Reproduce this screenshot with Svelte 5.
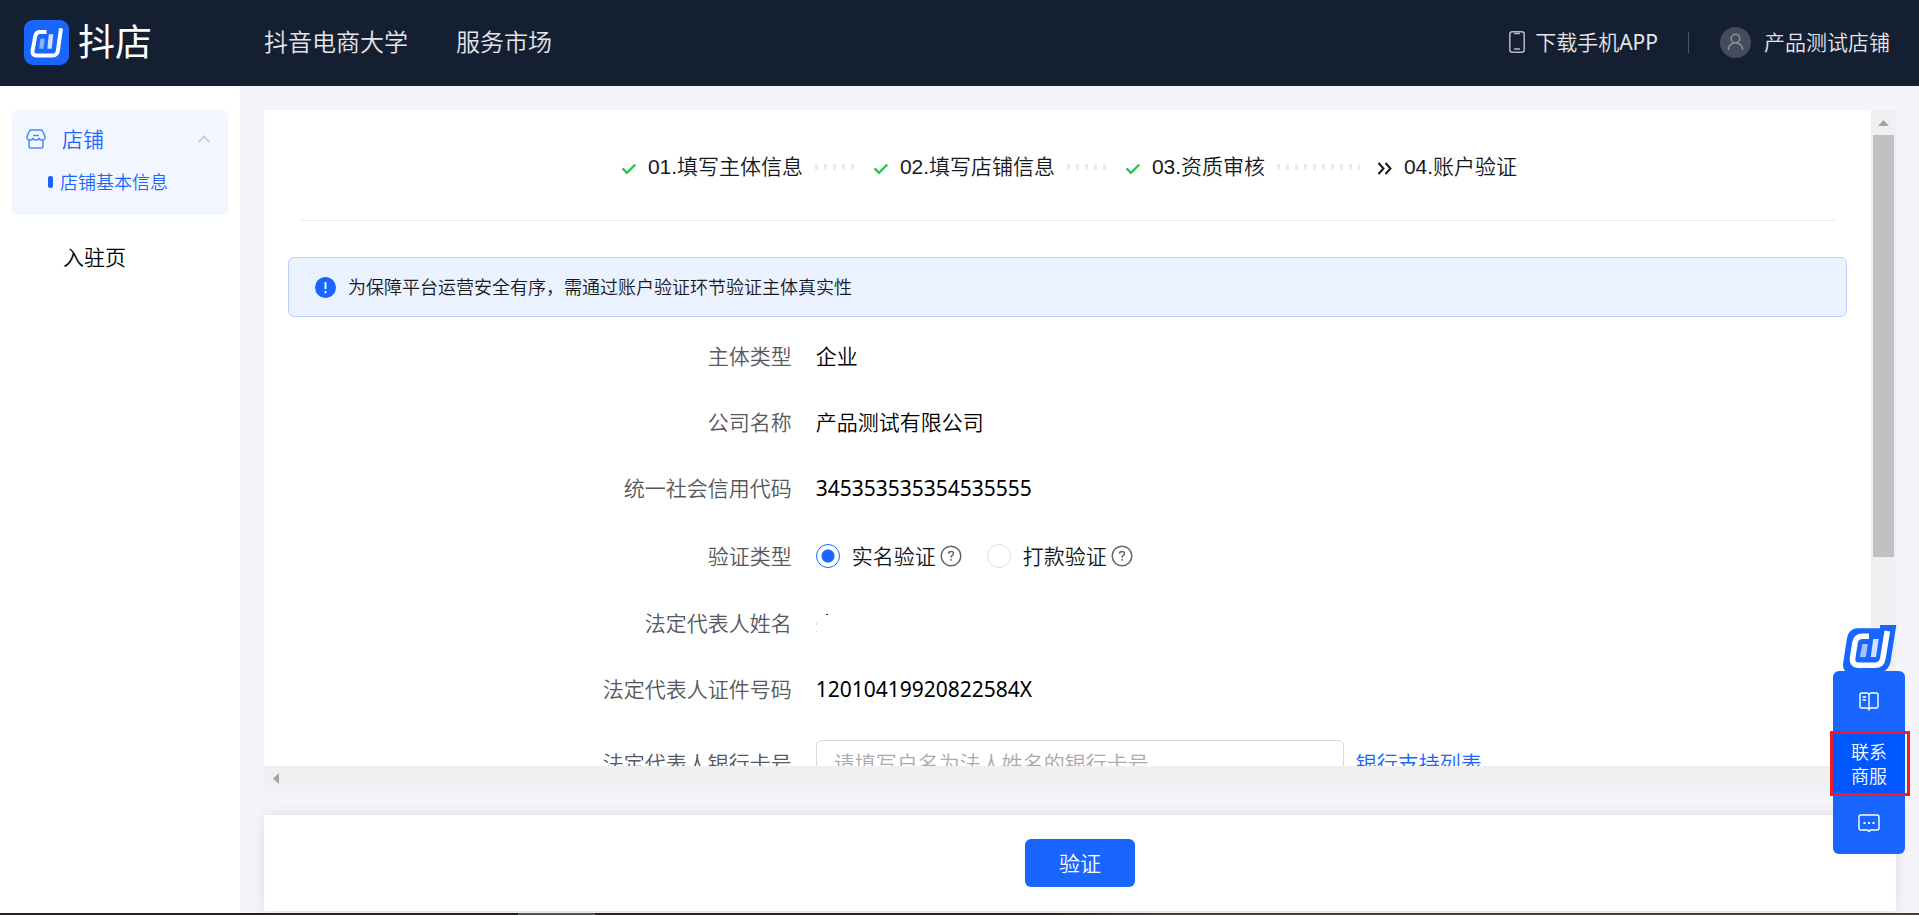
<script>
    let verifyType = "real";
    let cardNo = "";

    const navLinks = ["抖音电商大学", "服务市场"];

    const steps = [
        { text: "01.填写主体信息", done: true },
        { text: "02.填写店铺信息", done: true },
        { text: "03.资质审核", done: true },
        { text: "04.账户验证", done: false }
    ];

    const baseInfo = [
        { label: "主体类型", value: "企业" },
        { label: "公司名称", value: "产品测试有限公司" },
        { label: "统一社会信用代码", value: "345353535354535555", code: true }
    ];

    const verifyTypes = [
        { id: "real", text: "实名验证" },
        { id: "pay", text: "打款验证" }
    ];
</script>

<div class="app">
    <header>
        <a class="logo" href="#home">
            <svg width="45" height="45" viewBox="0 0 45 45" aria-hidden="true">
                <rect width="45" height="45" rx="9" fill="#1966ff" />
                <path d="M22.5 12H16Q12 12 11.3 16L8.6 30.5Q7.8 35.5 12.5 35.5H28.5Q33 35.5 33.8 31L37 8.3" fill="none" stroke="#fff" stroke-width="4" />
                <path d="M16.4 18.7h4.4l-1.4 10H15z" fill="#8cb2ff" />
                <path d="M24.8 14.3h4.5l-1.6 14.4h-4.4z" fill="#d1e0ff" />
            </svg>
            <span>抖店</span>
        </a>
        <nav>
            {#each navLinks as link}
                <a href="#nav">{link}</a>
            {/each}
        </nav>
        <a class="download" href="#app">
            <svg width="16" height="22" viewBox="0 0 16 22" fill="none" stroke="#b4b8bf" aria-hidden="true">
                <rect x="0.8" y="0.8" width="14.4" height="20.4" rx="2.5" stroke-width="1.5" />
                <path d="M5 2.5h6M5 18h6" stroke-width="1.4" />
            </svg>
            <span>下载手机<span class="code">APP</span></span>
        </a>
        <i class="split"></i>
        <button class="user">
            <svg width="31" height="31" viewBox="0 0 31 31" fill="none" aria-hidden="true">
                <circle cx="15.5" cy="15.5" r="15.5" fill="#444c5b" />
                <circle cx="15.5" cy="11.5" r="4.3" stroke="#8b919c" stroke-width="1.5" />
                <path d="M8.3 23c0-4.5 3.2-7.2 7.2-7.2s7.2 2.7 7.2 7.2" stroke="#8b919c" stroke-width="1.5" />
            </svg>
            <span>产品测试店铺</span>
        </button>
    </header>

    <div class="body">
        <aside>
            <div class="group">
                <button class="group-title">
                    <svg width="20" height="20" viewBox="0 0 20 20" fill="none" stroke="#4a87ff" stroke-width="1.5" aria-hidden="true">
                        <path d="M5 1h10q1 0 1.5 1L19 7.5q.3 3.5-3 3.5-2 0-3-1.5-1 1.5-3 1.5T7 9.5Q6 11 4 11 .7 11 1 7.5L3.5 2Q4 1 5 1z" />
                        <path d="M3 11v6.500q0 1.500 1.500 1.500h11q1.500 0 1.500-1.500V11M7 6.500h6" />
                    </svg>
                    <span>店铺</span>
                    <svg class="arrow" width="12" height="8" viewBox="0 0 12 8" fill="none" stroke="#c4c8cf" stroke-width="1.5" aria-hidden="true">
                        <path d="M.7 7.2L6 1.2l5.3 6" />
                    </svg>
                </button>
                <a class="sub" href="#shop">店铺基本信息</a>
            </div>
            <a class="entry" href="#entry">入驻页</a>
        </aside>

        <main>
            <section class="panel">
                <div class="content">
                    <ol class="steps">
                        {#each steps as step}
                            <li>
                                {#if step.done}
                                    <svg width="18" height="18" viewBox="0 0 18 18" fill="none" stroke="#29c352" stroke-width="2.4" aria-hidden="true">
                                        <path d="M2.5 10.3l4.4 4.6L15.3 6.5" />
                                    </svg>
                                {:else}
                                    <svg width="18" height="18" viewBox="0 0 18 18" fill="none" stroke="#16181d" stroke-width="2" aria-hidden="true">
                                        <path d="M2.5 5L7.5 10.5l-5 5.5M9.5 5L14.5 10.5l-5 5.5" />
                                    </svg>
                                {/if}
                                <span>{step.text}</span>
                                {#if step.done}
                                    <i class="dots"></i>
                                {/if}
                            </li>
                        {/each}
                    </ol>

                    <div class="alert">
                        <svg width="21" height="21" viewBox="0 0 21 21" aria-hidden="true">
                            <circle cx="10.5" cy="10.5" r="10.5" fill="#1966ff" />
                            <path d="M10.5 5v7M10.5 14v2.2" stroke="#fff" stroke-width="1.8" />
                        </svg>
                        <span>为保障平台运营安全有序，需通过账户验证环节验证主体真实性</span>
                    </div>

                    <form>
                        {#each baseInfo as item}
                            <div class="row">
                                <span class="label">{item.label}</span>
                                <span class="value" class:code={item.code}>{item.value}</span>
                            </div>
                        {/each}
                        <div class="row radios">
                            <span class="label">验证类型</span>
                            <div class="value" role="radiogroup" aria-label="验证类型">
                                {#each verifyTypes as type}
                                    <label class="radio">
                                        <input type="radio" name="verify" value={type.id} bind:group={verifyType} />
                                        <span>{type.text}</span>
                                        <svg width="22" height="22" viewBox="0 0 22 22" fill="none" stroke="#63666c" aria-hidden="true">
                                            <circle cx="11" cy="11" r="9.8" stroke-width="1.5" />
                                            <path d="M8.5 8.8q0-2.4 2.5-2.4t2.5 2.2q0 1.3-1.4 2.1-1.1.7-1.1 2M11 14v1.7" stroke-width="1.5" />
                                        </svg>
                                    </label>
                                {/each}
                            </div>
                        </div>
                        <div class="row">
                            <span class="label">法定代表人姓名</span>
                            <span class="value">
                                <svg width="12" height="24" viewBox="0 0 12 24" aria-hidden="true">
                                    <rect x="10" y="3" width="2" height="1" fill="#222" />
                                    <rect x="0" y="12" width="1" height="2" fill="#ffc57a" />
                                    <rect x="0" y="20" width="1" height="1" fill="#ffdcae" />
                                </svg>
                            </span>
                        </div>
                        <div class="row">
                            <span class="label">法定代表人证件号码</span>
                            <span class="value code">12010419920822584X</span>
                        </div>
                        <div class="row card">
                            <label class="label" for="card">法定代表人银行卡号</label>
                            <div class="value">
                                <input id="card" type="text" placeholder="请填写户名为法人姓名的银行卡号" bind:value={cardNo} />
                                <a href="#banks">银行支持列表</a>
                            </div>
                        </div>
                    </form>
                </div>
                <div class="track-y" aria-hidden="true">
                    <svg width="11" height="6" viewBox="0 0 11 6"><path d="M0 6L5.5 0 11 6z" fill="#a3a3a3" /></svg>
                    <i class="thumb"></i>
                </div>
                <div class="track-x" aria-hidden="true">
                    <svg width="6" height="11" viewBox="0 0 6 11"><path d="M6 0L0 5.5 6 11z" fill="#a3a3a3" /></svg>
                </div>
            </section>

            <footer>
                <button class="submit">验证</button>
            </footer>
        </main>
    </div>
    <div class="strip"></div>

    <div class="float">
        <svg class="mark" width="54" height="47" viewBox="0 0 54 47" aria-hidden="true">
            <path d="M37 3.3V0H53.3L47.5 37Q46 44 40 47H3Q-.6 44 .2 38L4 13Q6 3.3 15 3.3z" fill="#1966ff" />
            <path d="M26 11.2H19.5Q13 11.2 12 17.5L9.7 32.5Q8.5 40.3 16 40.3H32Q38.8 40.3 39.9 33L44.3 6" fill="none" stroke="#fff" stroke-width="5.6" />
            <path d="M19.3 19h5.5l-2 13h-6z" fill="#a3c2ff" />
            <path d="M30.2 14h5.5l-2.7 18h-5.2z" fill="#d1e0ff" />
        </svg>
        <div class="tools">
            <button aria-label="帮助文档">
                <svg width="20" height="19" viewBox="0 0 20 19" fill="none" stroke="#fff" stroke-width="1.4" aria-hidden="true">
                    <path d="M10 2.5Q9.5 1 8 1H2.5Q1 1 1 2.5v12Q1 16 2.5 16H8q1.5 0 2 1.5.5-1.5 2-1.5h5.5q1.5 0 1.5-1.5v-12Q19 1 17.5 1H12q-1.5 0-2 1.5zV17M3.5 5H7M3.5 8H7" />
                </svg>
            </button>
            <button class="contact">联系<br />商服</button>
            <button aria-label="消息">
                <svg width="22" height="19" viewBox="0 0 22 19" fill="none" aria-hidden="true">
                    <path d="M3 1h16q2 0 2 2v11q0 2-2 2h-6.500L11 17.500 9.500 16H3q-2 0-2-2V3q0-2 2-2z" stroke="#fff" stroke-width="1.4" />
                    <path d="M5.500 8h2v2h-2zM10 8h2v2h-2zM14.500 8h2v2h-2z" fill="#fff" />
                </svg>
            </button>
        </div>
    </div>
</div>

<style>
    :global(body) {
        background: #f4f4fa;
    }

    .app {
        display: flex;
        flex-direction: column;
        height: 100vh;
        overflow: hidden;
        font-family: "Noto Sans", "Noto Sans CJK SC", sans-serif;
        font-size: 21px;
        font-weight: 350;
        line-height: 30px;
        color: #16181d;
    }

    .app * {
        box-sizing: border-box;
    }

    a {
        color: inherit;
        text-decoration: none;
    }

    button {
        border: none;
        padding: 0;
        background: transparent;
        font: inherit;
        color: inherit;
        cursor: pointer;
    }

    svg {
        flex: none;
        display: block;
    }

    header {
        flex: none;
        display: flex;
        align-items: center;
        height: 86px;
        padding: 0 29px 2px 24px;
        background: #151f32;
        color: #e4e6e9;
    }

    .logo {
        display: flex;
        align-items: center;
        gap: 9px;
        width: 240px;
        font-size: 37px;
        font-weight: 400;
        color: #fff;
    }

    nav {
        display: flex;
        gap: 48px;
        margin-right: auto;
        font-size: 24px;
    }

    .download {
        display: flex;
        align-items: center;
        gap: 10px;
    }

    .code {
        font-weight: 400;
    }

    .split {
        width: 1px;
        height: 21px;
        margin: 0 31px 0 30px;
        background: #4c5461;
    }

    .user {
        display: flex;
        align-items: center;
        gap: 13px;
    }

    .body {
        flex: 1;
        display: flex;
        min-height: 0;
    }

    aside {
        flex: none;
        width: 240px;
        padding: 24px 12px;
        background: #fff;
    }

    .group {
        padding: 14px 18px 17px 14px;
        border-radius: 6px;
        background: #f2f7ff;
        color: #1966ff;
    }

    .group-title {
        display: flex;
        align-items: center;
        gap: 16px;
        width: 100%;
    }

    .arrow {
        margin-left: auto;
    }

    .sub {
        display: flex;
        align-items: center;
        gap: 7px;
        height: 44px;
        padding: 12px 0 0 22px;
        font-size: 18px;
    }

    .sub::before {
        content: "";
        width: 5px;
        height: 12px;
        border-radius: 2px;
        background: #1966ff;
    }

    .entry {
        display: block;
        margin-top: 27px;
        padding-left: 51px;
        color: #000;
    }

    main {
        flex: 1;
        display: flex;
        flex-direction: column;
        gap: 24px;
        min-width: 0;
        padding: 24px 23px 2px 24px;
    }

    .panel {
        flex: 1;
        display: grid;
        grid-template-columns: 1fr 25px;
        grid-template-rows: 1fr 25px;
        min-height: 0;
        background: #fff;
    }

    .content {
        min-height: 0;
        overflow: hidden;
        padding: 0 24px;
    }

    .steps {
        display: flex;
        justify-content: center;
        height: 111px;
        margin: 0 12px;
        padding: 42px 0 0 2px;
        border-bottom: 1px solid #ededed;
        list-style: none;
        font-family: "Liberation Sans", "Noto Sans CJK SC", sans-serif;
    }

    .steps li {
        display: flex;
        align-items: center;
        height: 30px;
        white-space: nowrap;
    }

    .steps li:not(:last-child) {
        width: 252px;
    }

    .steps span {
        margin-left: 10px;
    }

    .dots {
        flex: 1;
        height: 6px;
        margin: 0 16px 0 12px;
        background: repeating-linear-gradient(90deg, #ebebed 0 3px, transparent 3px 9px);
    }

    .alert {
        display: flex;
        align-items: center;
        gap: 12px;
        height: 60px;
        margin: 36px 0 18px;
        padding: 0 27px 0 26px;
        border: 1px solid #b8d0ff;
        border-radius: 6px;
        background: #ebf2ff;
        font-size: 18px;
    }

    form {
        padding-right: 24px;
    }

    .row {
        display: grid;
        grid-template-columns: 1fr 2fr;
        gap: 24px;
        align-items: center;
        height: 42px;
        margin-bottom: 24px;
    }

    .label {
        text-align: right;
        color: #55585c;
    }

    .value {
        color: #000;
    }

    .radios {
        height: 45px;
    }

    .radios .value {
        display: flex;
        gap: 25px;
        color: #16181d;
    }

    .radio {
        display: flex;
        align-items: center;
    }

    .radio span {
        margin: 0 4px 0 12px;
    }

    .radio input {
        appearance: none;
        width: 24px;
        height: 24px;
        margin: 0;
        border: 1px solid #dcdee1;
        border-radius: 50%;
        background: #fff;
    }

    .radio input:checked {
        border-color: #1966ff;
        background: radial-gradient(circle, #1966ff 6px, #fff 7px);
    }

    .card {
        height: 48px;
        margin-top: 30px;
    }

    .card .value {
        display: flex;
        align-items: center;
        gap: 12px;
    }

    .card input {
        width: 528px;
        height: 48px;
        padding: 0 17px 2px;
        border: 1px solid #d6d8db;
        border-radius: 6px;
        outline: none;
        font: inherit;
    }

    .card .label,
    .card a {
        padding-bottom: 2px;
    }

    .card input::placeholder {
        color: #a9abae;
    }

    .card a {
        color: #1966ff;
    }

    .track-y {
        display: flex;
        flex-direction: column;
        align-items: center;
        padding: 10px 2px 25px;
        background: #f0f0f0;
    }

    .thumb {
        width: 100%;
        height: 68%;
        margin-top: 9px;
        background: #c1c1c1;
    }

    .track-x {
        grid-column: 1 / 3;
        display: flex;
        align-items: center;
        padding-left: 9px;
        background: #f0f0f0;
    }

    footer {
        flex: none;
        display: flex;
        align-items: center;
        justify-content: center;
        height: 96px;
        background: #fff;
        box-shadow: 0 0 12px rgba(20, 20, 40, 0.1);
    }

    .submit {
        height: 48px;
        padding: 0 34px;
        border-radius: 6px;
        background: #1966ff;
        color: #fff;
    }

    .strip {
        flex: none;
        height: 2px;
        background: linear-gradient(90deg, #231f22 27%, #555355 27% 31%, #231f22 31% 54%, #45402a 60%);
    }

    .float {
        position: fixed;
        right: 14px;
        bottom: 61px;
        width: 72px;
    }

    .mark {
        margin-left: 10px;
    }

    .tools {
        display: grid;
        grid-template-rows: repeat(3, 61px);
        border-radius: 6px;
        margin-top: -1px;
        background: #1966ff;
        font-size: 18px;
        line-height: 24px;
        color: #fff;
    }

    .tools button {
        display: grid;
        place-items: center;
    }

    /* highlighted entry sticks out of the bar on every side */
    .tools .contact {
        display: block;
        margin: -1px -5px -3px -3px;
        padding-right: 2px;
        border: 3px solid #ee1c25;
        background: linear-gradient(#0057ff, #0057ff) 0 / 72px no-repeat;
    }
</style>
